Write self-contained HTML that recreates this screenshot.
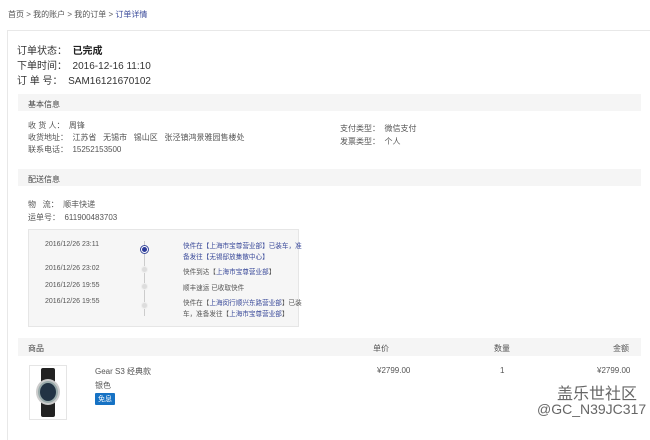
<!DOCTYPE html>
<html><head><meta charset="utf-8"><style>
*{margin:0;padding:0;box-sizing:border-box}
body{width:650px;height:430px;background:#fff;position:relative;overflow:hidden;font-family:"Liberation Sans","Noto Sans CJK SC",sans-serif;color:#555}
.a{position:absolute;white-space:nowrap}
.bar{position:absolute;left:18px;width:623px;height:17px;background:#f5f5f5;font-size:8px;color:#444;padding:5px 0 0 10px}
.s{font-size:8px;color:#555}
.m{font-size:10px;color:#333}
.b{color:#3a4a9a}
</style></head><body>
<div class="a" style="left:8px;top:9px;font-size:8px;color:#555">首页 &gt; 我的账户 &gt; 我的订单 &gt; <span class="b">订单详情</span></div>
<div class="a" style="left:7px;top:30px;width:650px;height:410px;border-left:1px solid #e8e8e8;border-top:1px solid #e8e8e8"></div>
<div class="a m" style="left:17px;top:42px">订单状态：&nbsp; <b style="font-weight:bold;color:#222">已完成</b></div>
<div class="a m" style="left:17px;top:57px">下单时间：&nbsp; 2016-12-16 11:10</div>
<div class="a m" style="left:17px;top:72px">订 单 号：&nbsp; SAM16121670102</div>
<div class="bar" style="top:94px">基本信息</div>
<div class="a s" style="left:28px;top:120px">收 货 人：&nbsp; 周锋</div>
<div class="a s" style="left:28px;top:132px">收货地址：&nbsp; 江苏省&nbsp;&nbsp; 无锡市&nbsp;&nbsp; 锡山区&nbsp;&nbsp; 张泾镇鸿景雅园售楼处</div>
<div class="a s" style="left:28px;top:144px">联系电话：&nbsp; 15252153500</div>
<div class="a s" style="left:340px;top:123px">支付类型：&nbsp; 微信支付</div>
<div class="a s" style="left:340px;top:136px">发票类型：&nbsp; 个人</div>
<div class="bar" style="top:169px">配送信息</div>
<div class="a s" style="left:28px;top:199px">物&nbsp;&nbsp; 流：&nbsp; 顺丰快递</div>
<div class="a s" style="left:28px;top:212px">运单号：&nbsp; 611900483703</div>
<div class="a" style="left:28px;top:229px;width:271px;height:98px;background:#f6f6f6;border:1px solid #e6e6e6"></div>
<div class="a" style="left:144px;top:241px;width:1px;height:75px;background:#ccc"></div>
<div class="a" style="left:140px;top:245px;width:9px;height:9px;border-radius:50%;background:#fff;border:1px solid #3a4a9a"></div>
<div class="a" style="left:142px;top:247px;width:5px;height:5px;border-radius:50%;background:#2a3a9a"></div>
<div class="a" style="left:141px;top:266px;width:7px;height:7px;border-radius:50%;background:#ddd;border:1px solid #eee"></div>
<div class="a" style="left:141px;top:283px;width:7px;height:7px;border-radius:50%;background:#ddd;border:1px solid #eee"></div>
<div class="a" style="left:141px;top:302px;width:7px;height:7px;border-radius:50%;background:#ddd;border:1px solid #eee"></div>
<div class="a" style="left:45px;top:241px;font-size:7px">2016/12/26 23:11</div>
<div class="a" style="left:45px;top:265px;font-size:7px">2016/12/26 23:02</div>
<div class="a" style="left:45px;top:282px;font-size:7px">2016/12/26 19:55</div>
<div class="a" style="left:45px;top:298px;font-size:7px">2016/12/26 19:55</div>
<div class="a b" style="left:183px;top:241px;font-size:6.6px;line-height:11px">快件在【上海市宝尊营业部】已装车，准<br>备发往【无锡邸放集散中心】</div>
<div class="a" style="left:183px;top:266px;font-size:6.6px">快件到达【<span class="b">上海市宝尊营业部</span>】</div>
<div class="a" style="left:183px;top:282px;font-size:6.6px">顺丰速运 已收取快件</div>
<div class="a" style="left:183px;top:298px;font-size:6.6px;line-height:11px">快件在【<span class="b">上海闵行顺兴东路营业部</span>】已装<br>车，准备发往【<span class="b">上海市宝尊营业部</span>】</div>
<div class="bar" style="top:338px;height:18px">商品</div>
<div class="a s" style="left:373px;top:343px">单价</div>
<div class="a s" style="left:494px;top:343px">数量</div>
<div class="a s" style="left:613px;top:343px">金额</div>
<div class="a" style="left:29px;top:365px;width:38px;height:55px;border:1px solid #e5e5e5;background:#fff"></div>
<div class="a" style="left:41px;top:368px;width:14px;height:49px;background:#222;border-radius:2px"></div>
<div class="a" style="left:36px;top:379px;width:24px;height:26px;border-radius:50%;background:#9aa;border:2px solid #ccc"></div>
<div class="a" style="left:40px;top:383px;width:16px;height:18px;border-radius:50%;background:#234"></div>
<div class="a s" style="left:95px;top:366px">Gear S3 经典款</div>
<div class="a s" style="left:95px;top:380px">银色</div>
<div class="a" style="left:95px;top:393px;background:#1672c4;color:#fff;font-size:7px;padding:1px 3px;border-radius:1px">免息</div>
<div class="a s" style="left:377px;top:366px">¥2799.00</div>
<div class="a s" style="left:500px;top:366px">1</div>
<div class="a s" style="left:597px;top:366px">¥2799.00</div>
<div class="a" style="left:557px;top:380px;font-size:16px;color:#666">盖乐世社区</div>
<div class="a" style="left:537px;top:401px;font-size:14px;color:#666">@GC_N39JC317</div>
</body></html>
